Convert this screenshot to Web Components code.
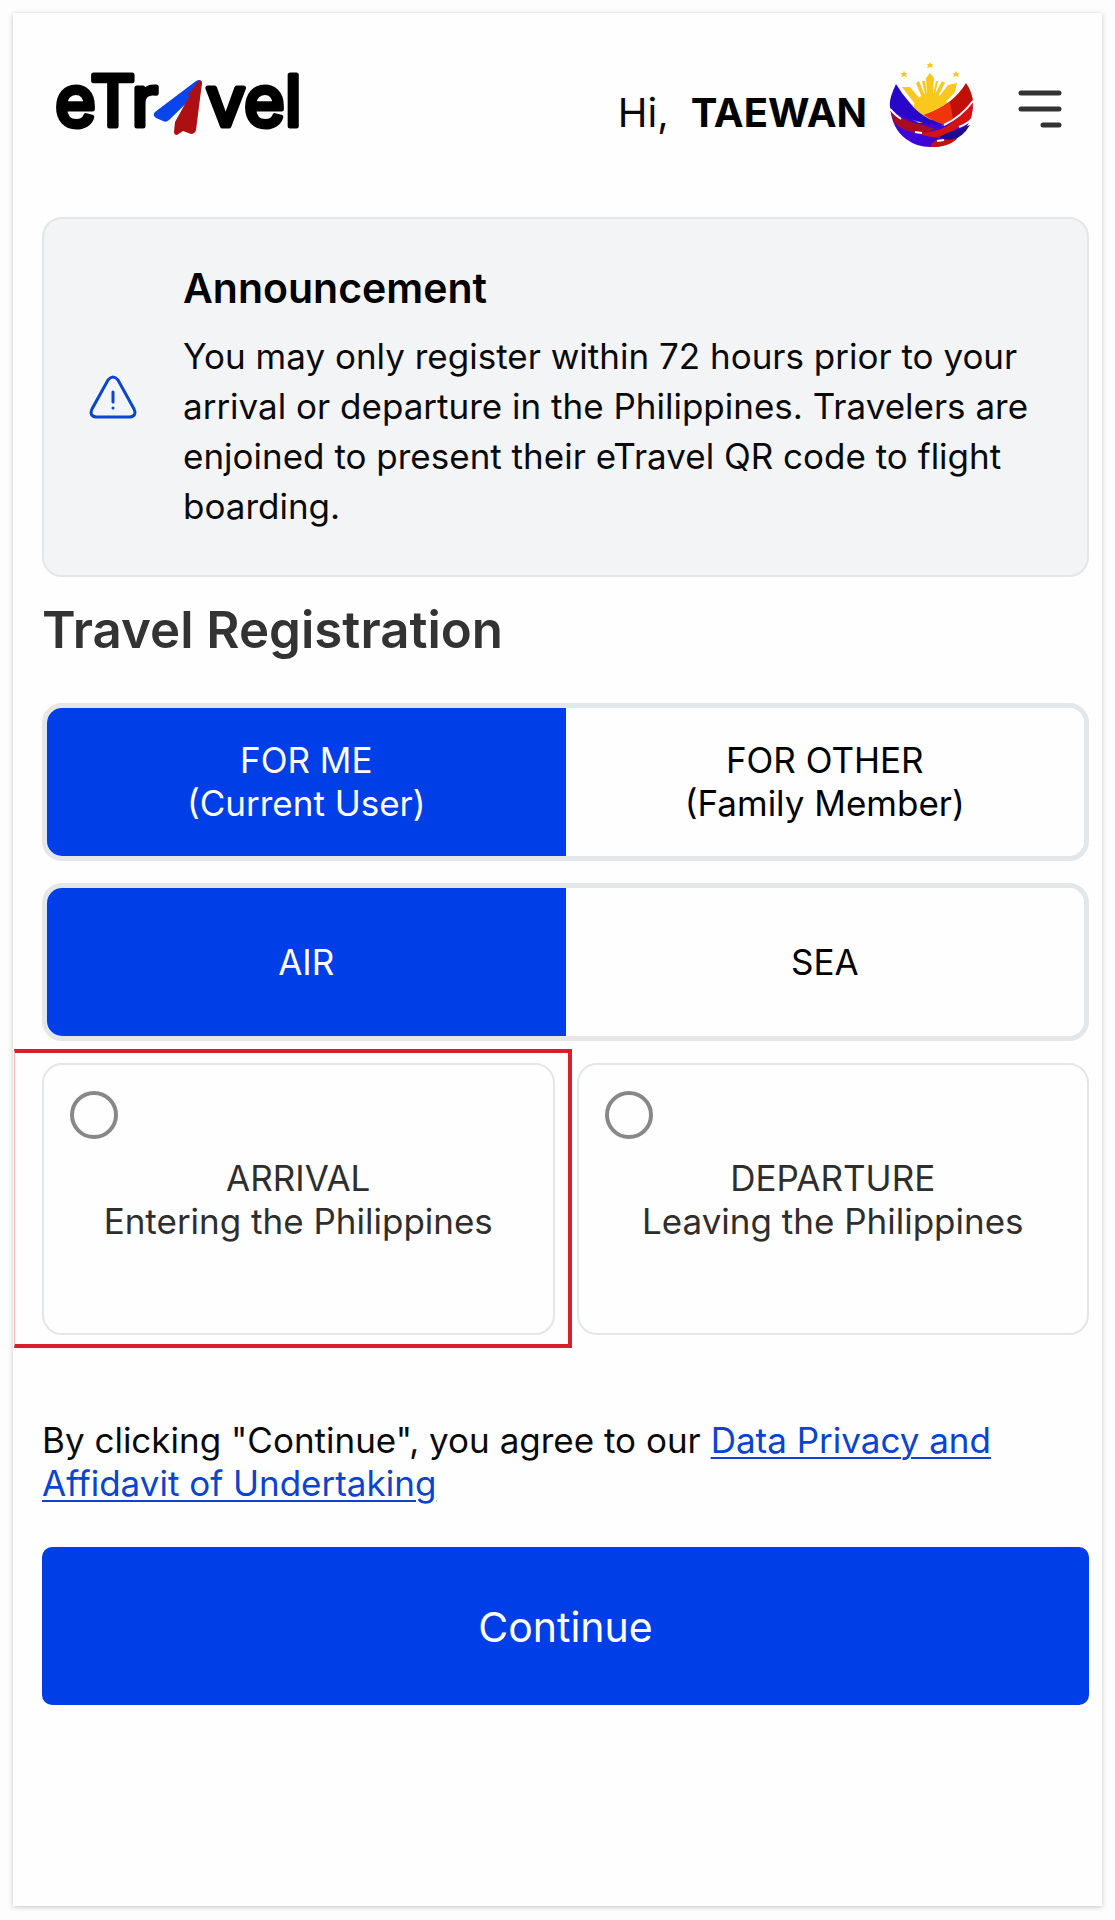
<!DOCTYPE html>
<html lang="en">
<head>
<meta charset="utf-8">
<meta name="viewport" content="width=device-width, initial-scale=1">
<title>eTravel - Travel Registration</title>
<style>
  body {
    margin: 0;
    background: #fdfdfd;
    color: #0a0a0a;
    font-family: Inter, "Open Sans", sans-serif;
    font-size: 35px;
    line-height: 43px;
    --blue: #003fe8;
    --link: #0a44d0;
    --line: #e5e6e7;
    --dark: #333;
  }
  h1 {
    margin: 22px 0 42px;
    color: var(--dark);
    font-size: 51px;
    font-weight: 600;
    line-height: 62px;
  }
  p { margin: 0; }
  a { color: var(--link); text-decoration-thickness: 2px; text-underline-offset: 4px; }
  .name { color: #000; font-weight: 700; }
</style>
</head>
<body>
<page-card>
  <site-header slot="header">Hi,<span slot="name" class="name">TAEWAN</span></site-header>
  <announcement-box>
    <span slot="title">Announcement</span>
    You may only register within 72 hours prior to your arrival or departure in the Philippines. Travelers are enjoined to present their eTravel QR code to flight boarding.
  </announcement-box>
  <h1>Travel Registration</h1>
  <segmented-toggle label="Registering for">
    <span slot="first">FOR ME<br>(Current User)</span>
    <span slot="second">FOR OTHER<br>(Family Member)</span>
  </segmented-toggle>
  <segmented-toggle label="Mode of travel">
    <span slot="first">AIR</span>
    <span slot="second">SEA</span>
  </segmented-toggle>
  <trip-options>
    <span slot="arrival">ARRIVAL<br>Entering the Philippines</span>
    <span slot="departure">DEPARTURE<br>Leaving the Philippines</span>
  </trip-options>
  <p>By clicking "Continue", you agree to our <a href="#privacy">Data Privacy and Affidavit of Undertaking</a></p>
  <primary-button>Continue</primary-button>
</page-card>

<script>
class PageCard extends HTMLElement {
  constructor() {
    super();
    this.attachShadow({ mode: 'open' });
    this.shadowRoot.innerHTML = `
      <style>
        :host {
          display: block;
          box-sizing: border-box;
          min-height: calc(100vh - 27px);
          margin: 13px 13px 14px 13px;
          padding: 0 13px 40px 29px;
          background: #fefefe;
          box-shadow: 0 1px 5px rgba(0, 0, 0, 0.22);
        }
      </style>
      <slot name="header"></slot>
      <main><slot></slot></main>
    `;
  }
}
customElements.define('page-card', PageCard);

class BrandLogo extends HTMLElement {
  constructor() {
    super();
    this.attachShadow({ mode: 'open' });
    this.shadowRoot.innerHTML = `
      <style>
        :host { display: block; }
        svg { display: block; }
        text {
          font: 400 70px Inter, sans-serif;
          stroke: #000;
          stroke-width: 5px;
          stroke-linejoin: round;
        }
      </style>
      <svg width="262" height="96" viewBox="-6 -12 262 96" role="img" aria-label="eTravel">
        <text x="-2" y="57">eTr</text>
        <text x="149" y="57">vel</text>
        <path d="M98 43 L139 12 Q144 9 145 14 L143 21 L112 51 Q109 54 106 52 L99 49 Q95 46 98 43Z" fill="#0a45ea"/>
        <path d="M145 14 L139 61 Q138 65 134 65 L126 62 L120 66 Q117 66 117 63 L118 53 L133 26 L130 27 L138 17 Q144 8 145 14Z" fill="#ad1012"/>
      </svg>
    `;
  }
}
customElements.define('brand-logo', BrandLogo);

class SiteHeader extends HTMLElement {
  constructor() {
    super();
    this.attachShadow({ mode: 'open' });
    this.shadowRoot.innerHTML = `
      <style>
        :host { display: block; }
        header {
          display: flex;
          align-items: center;
          justify-content: space-between;
          height: 184px;
          margin-bottom: 20px;
          padding: 0 26px 0 9px;
          box-sizing: border-box;
        }
        .user {
          display: flex;
          align-items: center;
          gap: 22px;
          font-size: 40px;
        }
        .greeting {
          display: flex;
          gap: 22px;
          padding-top: 14px;
        }
        .emblem { display: block; }
        button {
          display: block;
          margin-left: 20px;
          padding: 8px 0 0;
          border: 0;
          background: none;
        }
        button svg { display: block; }
      </style>
      <header>
        <brand-logo></brand-logo>
        <div class="user">
          <div class="greeting"><span><slot></slot></span><slot name="name"></slot></div>
          <svg class="emblem" width="86" height="88" viewBox="0 0 86 88" aria-hidden="true">
            <g fill="#f8c81c">
              <path d="M41 1l1 2 2 0-1 2 1 2-3-1-3 1 1-2-1-2 2 0z"/>
              <path d="M15 10l1 2 2 0-1 2 1 2-3-1-3 1 1-2-1-2 2 0z"/>
              <path d="M67 10l1 2 2 0-1 2 1 2-3-1-3 1 1-2-1-2 2 0z"/>
              <path d="M13 26l8 0 10 12-5 5z"/>
              <path d="M14 39l10 5-1 4zM27 22l3-2 6 15-3 2zM33 20l3 0 2 14-2 0z"/>
              <path d="M37 17l4-5 4 5-1 17h-6z"/>
              <path d="M47 20l2 0-3 14-2 0zM53 20l3 2-8 15-3-2z"/>
              <path d="M59 24l9-2-2 9-11 12-6-6z"/>
              <circle cx="42" cy="50" r="18"/>
            </g>
            <!-- lower bowl, then the woven bands over it -->
            <path d="M1 46Q3 68 17 78 29 87 44 86 62 85 74 71 82 62 84 46L60 56 30 62Z" fill="#3d06d8"/>
            <path d="M1 48Q12 60 34 64L46 68 32 73Q12 70 5 61Z" fill="#a80c20"/>
            <path d="M28 72Q48 71 58 65 72 56 84 40 84 52 81 60L60 72Q52 84 40 86Q58 87 68 78 62 74 56 76 44 78 28 72Z" fill="#d41210"/>
            <path d="M58 72Q70 69 81 64 74 76 62 80L50 76Z" fill="#1c0a92"/>
            <path d="M50 78Q62 80 68 77 60 86 42 86Q40 82 50 78Z" fill="#c01018"/>
            <path d="M77 22Q64 44 35 54L54 65Q74 56 84 39 82 29 77 22Z" fill="#c01008"/>
            <path d="M61 41Q48 50 35 54L54 65 64 58Z" fill="#f0350c"/>
            <path d="M7 23Q-2 42 2 48 22 63 56 64 32 57 21 42 13 33 7 23Z" fill="#2807ca"/>
            <path d="M1 48Q6 54 12 58M55 64Q72 56 84 40M70 66Q78 63 83 58M26 71l7 1M48 80l7-1" fill="none" stroke="#fff" stroke-width="2"/>
          </svg>
          <button type="button" aria-label="Menu">
            <svg width="46" height="38" viewBox="0 0 46 38" stroke="#333" stroke-width="5" stroke-linecap="round">
              <path d="M4 3H42M4 19H42M26 35H42"/>
            </svg>
          </button>
        </div>
      </header>
    `;
  }
}
customElements.define('site-header', SiteHeader);

class AnnouncementBox extends HTMLElement {
  constructor() {
    super();
    this.attachShadow({ mode: 'open' });
    this.shadowRoot.innerHTML = `
      <style>
        :host {
          display: flex;
          align-items: center;
          gap: 46px;
          padding: 44px 50px 44px 45px;
          border: 2px solid var(--line);
          border-radius: 20px;
          background: #f3f4f6;
        }
        svg { flex: none; }
        h2 {
          margin: 0 0 18px;
          color: #000;
          font-size: 41px;
          font-weight: 600;
          line-height: 50px;
        }
        .body { line-height: 50px; }
      </style>
      <svg width="48" height="44" viewBox="0 0 48 44" fill="none" stroke="#0a44d0" stroke-width="3" stroke-linecap="round" aria-hidden="true">
        <path d="M19 5Q24-1 29 5L45 34Q48 41 41 42H7Q0 41 3 34Z"/>
        <path d="M24 17v10M24 33v0"/>
      </svg>
      <div>
        <h2><slot name="title"></slot></h2>
        <div class="body"><slot></slot></div>
      </div>
    `;
  }
}
customElements.define('announcement-box', AnnouncementBox);

class SegmentedToggle extends HTMLElement {
  constructor() {
    super();
    this.attachShadow({ mode: 'open' });
    this.shadowRoot.innerHTML = `
      <style>
        :host { display: block; margin-bottom: 22px; }
        .group {
          display: grid;
          grid-template-columns: 1fr 1fr;
          overflow: hidden;
          border: 5px solid var(--line);
          border-radius: 20px;
        }
        button {
          min-height: 148px;
          padding: 0 16px;
          border: 0;
          background: #fefefe;
          color: #000;
          font: inherit;
        }
        button[aria-pressed="true"] { background: var(--blue); color: #fff; }
      </style>
      <div class="group" role="group">
        <button type="button" aria-pressed="true"><slot name="first"></slot></button>
        <button type="button" aria-pressed="false"><slot name="second"></slot></button>
      </div>
    `;
  }

  connectedCallback() {
    const group = this.shadowRoot.querySelector('.group');
    group.setAttribute('aria-label', this.getAttribute('label'));
    const buttons = group.querySelectorAll('button');
    buttons.forEach((button) => {
      button.addEventListener('click', () => {
        buttons.forEach((b) => b.setAttribute('aria-pressed', String(b === button)));
      });
    });
  }
}
customElements.define('segmented-toggle', SegmentedToggle);

class TripOptions extends HTMLElement {
  constructor() {
    super();
    this.attachShadow({ mode: 'open' });
    this.shadowRoot.innerHTML = `
      <style>
        :host {
          display: grid;
          grid-template-columns: 1fr 1fr;
          gap: 22px;
          margin-bottom: 84px;
          color: #2e2e2e;
        }
        label {
          position: relative;
          display: flex;
          flex-direction: column;
          min-height: 272px;
          box-sizing: border-box;
          padding: 26px;
          border: 2px solid var(--line);
          border-radius: 20px;
          text-align: center;
        }
        input {
          width: 48px;
          height: 48px;
          margin: 0 0 18px;
          border: 4px solid #888;
          border-radius: 50%;
          appearance: none;
        }
        input:checked { background: radial-gradient(var(--blue) 50%, transparent 54%); }
        /* red frame round the arrival card, runs out to the page edge */
        .marked::before {
          content: "";
          position: absolute;
          inset: -16px -19px -15px -30px;
          border: 4px solid #d8202a;
          border-left: 1px solid #f3b5b8;
          pointer-events: none;
        }
      </style>
      <label class="marked">
        <input type="radio" name="trip" value="arrival">
        <span><slot name="arrival"></slot></span>
      </label>
      <label>
        <input type="radio" name="trip" value="departure">
        <span><slot name="departure"></slot></span>
      </label>
    `;
  }
}
customElements.define('trip-options', TripOptions);

class PrimaryButton extends HTMLElement {
  constructor() {
    super();
    this.attachShadow({ mode: 'open' });
    this.shadowRoot.innerHTML = `
      <style>
        :host { display: block; margin-top: 42px; }
        button {
          width: 100%;
          min-height: 158px;
          padding-top: 4px;
          border: 0;
          border-radius: 10px;
          background: var(--blue);
          color: #fff;
          font: inherit;
          font-size: 41px;
        }
      </style>
      <button type="button"><slot></slot></button>
    `;
  }
}
customElements.define('primary-button', PrimaryButton);
</script>
</body>
</html>
